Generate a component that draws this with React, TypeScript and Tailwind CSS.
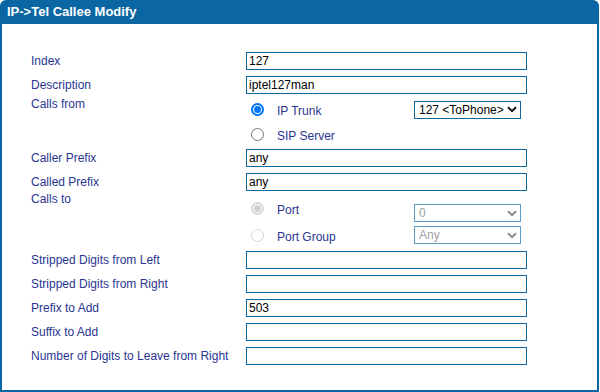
import React from "react";

const label = "text-[12px] text-[#2a3592]";

function TextBox({ value = "" }: { value?: string }) {
  return (
    <div className="w-[281px] h-[18px] border border-[#0f67a0] pl-[2px] flex items-center text-[12px] text-black leading-none">
      {value}
    </div>
  );
}

function Chevron({ color }: { color: string }) {
  return (
    <svg width="10" height="7" viewBox="0 0 10 7">
      <path d="M1 1.2 L5 5.2 L9 1.2" fill="none" stroke={color} strokeWidth="2" />
    </svg>
  );
}

function Select({ value, disabled }: { value: string; disabled?: boolean }) {
  return (
    <div
      className={
        "w-[107px] h-[18px] border flex items-center justify-between pl-[4px] pr-[3px] text-[12px] leading-none " +
        (disabled ? "border-[#5c9bc6] text-[#a0a0a0]" : "border-[#0f67a0] text-black")
      }
    >
      <span>{value}</span>
      <Chevron color={disabled ? "#8a8a8a" : "#111"} />
    </div>
  );
}

function Radio({ checked, disabled }: { checked?: boolean; disabled?: boolean }) {
  if (disabled) {
    return (
      <div className="w-[13px] h-[13px] rounded-full border border-[#d4d4d4] bg-white flex items-center justify-center">
        {checked && <div className="w-[9px] h-[9px] rounded-full bg-[#cfcfcf] border-[1.5px] border-white outline outline-[#cfcfcf]" />}
      </div>
    );
  }
  if (checked) {
    return (
      <div className="w-[13px] h-[13px] rounded-full border-2 border-[#0075ff] bg-white flex items-center justify-center">
        <div className="w-[7px] h-[7px] rounded-full bg-[#0075ff]" />
      </div>
    );
  }
  return <div className="w-[13px] h-[13px] rounded-full border border-[#767676] bg-white" />;
}

function Row({ name, children, h = "h-[24px]" }: { name: string; children: React.ReactNode; h?: string }) {
  return (
    <div className={"flex items-center " + h}>
      <div className={"w-[215px] " + label}>{name}</div>
      {children}
    </div>
  );
}

export default function App() {
  return (
    <div className="w-[599px] h-[392px] flex flex-col font-['Liberation_Sans',Arial,sans-serif] bg-white">
      <div className="h-[24px] bg-[#0a67a3] rounded-t-[6px] flex items-center pl-[7px] text-white font-bold text-[13px]">
        IP-&gt;Tel Callee Modify
      </div>
      <div className="flex-1 border-2 border-t-0 border-[#0a67a3] pl-[29px] pt-[25px]">
        <Row name="Index">
          <TextBox value="127" />
        </Row>
        <Row name="Description">
          <TextBox value="iptel127man" />
        </Row>
        <div className="flex">
          <div className={"w-[215px] leading-[14px] " + label}>Calls from</div>
          <div className="flex flex-col">
            <div className="h-[25px] flex items-center">
              <div className="w-[31px] flex pl-[5px]">
                <Radio checked />
              </div>
              <div className={"w-[137px] pt-[3px] " + label}>IP Trunk</div>
              <Select value="127 <ToPhone>" />
            </div>
            <div className="h-[24px] flex items-center">
              <div className="w-[31px] flex pl-[5px]">
                <Radio />
              </div>
              <div className={"pt-[3px] " + label}>SIP Server</div>
            </div>
          </div>
        </div>
        <Row name="Caller Prefix">
          <TextBox value="any" />
        </Row>
        <Row name="Called Prefix">
          <TextBox value="any" />
        </Row>
        <div className="flex">
          <div className={"w-[215px] leading-[14px] -mt-[2px] " + label}>Calls to</div>
          <div className="flex flex-col">
            <div className="h-[28px] flex">
              <div className="h-[28px] w-[31px] flex items-center pl-[5px]">
                <Radio checked disabled />
              </div>
              <div className={"w-[137px] h-[28px] pt-[4px] flex items-center " + label}>Port</div>
              <div className="self-end">
                <Select value="0" disabled />
              </div>
            </div>
            <div className="h-[26px] flex items-center">
              <div className="w-[31px] flex pl-[5px]">
                <Radio disabled />
              </div>
              <div className={"w-[137px] pt-[3px] " + label}>Port Group</div>
              <Select value="Any" disabled />
            </div>
          </div>
        </div>
        <Row name="Stripped Digits from Left">
          <TextBox />
        </Row>
        <Row name="Stripped Digits from Right">
          <TextBox />
        </Row>
        <Row name="Prefix to Add">
          <TextBox value="503" />
        </Row>
        <Row name="Suffix to Add">
          <TextBox />
        </Row>
        <Row name="Number of Digits to Leave from Right">
          <TextBox />
        </Row>
      </div>
    </div>
  );
}
